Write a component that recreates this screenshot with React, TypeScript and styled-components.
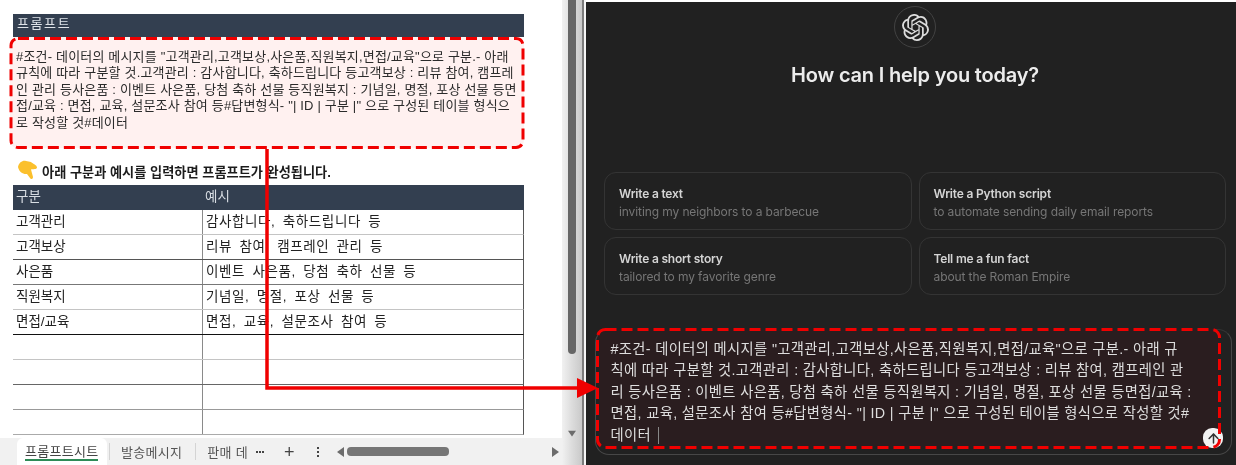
import React from 'react'
import styled, { createGlobalStyle } from 'styled-components'
import { SiOpenai } from 'react-icons/si'
import { ArrowUp } from 'lucide-react'

const KR = `'Liberation Sans', 'Noto Sans CJK KR', sans-serif`

const GlobalStyle = createGlobalStyle`
	html, body {
		margin: 0;
		padding: 0;
		background: #fff;
	}
	* {
		box-sizing: border-box;
	}
`

const leftPrompt = [
	'#조건- 데이터의 메시지를 "고객관리,고객보상,사은품,직원복지,면접/교육"으로 구분.- 아래',
	'규칙에 따라 구분할 것.고객관리 : 감사합니다, 축하드립니다 등고객보상 : 리뷰 참여, 캠프레',
	'인 관리 등사은품 : 이벤트 사은품, 당첨 축하 선물 등직원복지 : 기념일, 명절, 포상 선물 등면',
	'접/교육 : 면접, 교육, 설문조사 참여 등#답변형식- "| ID | 구분 |" 으로 구성된 테이블 형식으',
	'로 작성할 것#데이터',
]

const rightPrompt = [
	'#조건- 데이터의 메시지를 "고객관리,고객보상,사은품,직원복지,면접/교육"으로 구분.- 아래 규',
	'칙에 따라 구분할 것.고객관리 : 감사합니다, 축하드립니다 등고객보상 : 리뷰 참여, 캠프레인 관',
	'리 등사은품 : 이벤트 사은품, 당첨 축하 선물 등직원복지 : 기념일, 명절, 포상 선물 등면접/교육 :',
	'면접, 교육, 설문조사 참여 등#답변형식- "| ID | 구분 |" 으로 구성된 테이블 형식으로 작성할 것#',
]

const rows = [
	{ name: '고객관리', sample: '감사합니다, 축하드립니다 등', line: '#c4c4c4' },
	{ name: '고객보상', sample: '리뷰 참여, 캠프레인 관리 등', line: '#555' },
	{ name: '사은품', sample: '이벤트 사은품, 당첨 축하 선물 등', line: '#777' },
	{ name: '직원복지', sample: '기념일, 명절, 포상 선물 등', line: '#c4c4c4' },
	{ name: '면접/교육', sample: '면접, 교육, 설문조사 참여 등', line: '#111' },
	{ name: '', sample: '', line: '#c4c4c4' },
	{ name: '', sample: '', line: '#666' },
	{ name: '', sample: '', line: '#999' },
	{ name: '', sample: '', line: '#aaa' },
]

const suggestions = [
	{ title: 'Write a text', sub: 'inviting my neighbors to a barbecue' },
	{ title: 'Write a Python script', sub: 'to automate sending daily email reports' },
	{ title: 'Write a short story', sub: 'tailored to my favorite genre' },
	{ title: 'Tell me a fun fact', sub: 'about the Roman Empire' },
]

const App = () => {
	return (
		<Page>
			<GlobalStyle />
			<LeftPane>
				<Sheet>
					<SheetTitle>프롬프트</SheetTitle>
					<PromptCell>
						{leftPrompt.map((line) => (
							<PromptLine key={line}>{line}</PromptLine>
						))}
					</PromptCell>
					<Hint>
						<HandIcon viewBox="0 0 20 20">
							<path
								d="M0 7 C1 2 5 0 8 1 L13 2 C15 4 19 5 19 7.5 C19 9.5 15 9 13 9.5 L15 17 C15 19.5 12.5 19.5 12 18 L9 14 C5 14.5 1 12 0 7 Z"
								fill="#fbc02d"
							/>
						</HandIcon>
						아래 구분과 예시를 입력하면 프롬프트가 완성됩니다.
					</Hint>
					<TableHead>
						<HeadCell>구분</HeadCell>
						<HeadCell>예시</HeadCell>
					</TableHead>
					{rows.map((row, index) => (
						<TableRow key={index} line={row.line}>
							<BodyCell>{row.name}</BodyCell>
							<BodyCell>{row.sample}</BodyCell>
						</TableRow>
					))}
				</Sheet>
				<TabBar>
					<ActiveTab>프롬프트시트</ActiveTab>
					<TabDivider />
					<Tab>발송메시지</Tab>
					<TabDivider />
					<Tab>판매 데</Tab>
					<DotTool horizontal>
						<i />
						<i />
						<i />
					</DotTool>
					<PlusTool>+</PlusTool>
					<DotTool>
						<i />
						<i />
						<i />
					</DotTool>
					<HScroll>
						<ScrollArrow viewBox="0 0 8 10">
							<path d="M8 0 V10 L1 5 Z" />
						</ScrollArrow>
						<HThumb />
						<ScrollArrow viewBox="0 0 8 10">
							<path d="M0 0 V10 L7 5 Z" />
						</ScrollArrow>
					</HScroll>
				</TabBar>
			</LeftPane>
			<VScroll>
				<VThumb />
				<ScrollArrow viewBox="0 0 10 8">
					<path d="M0 0 H10 L5 7 Z" />
				</ScrollArrow>
			</VScroll>
			<PaneEdge />
			<ChatPane>
				<Hero>
					<LogoRing>
						<SiOpenai size={27} color="#dcdcdc" />
					</LogoRing>
					<Heading>How can I help you today?</Heading>
				</Hero>
				<CardGrid>
					{suggestions.map((item) => (
						<Card key={item.title}>
							<CardTitle>{item.title}</CardTitle>
							<CardSub>{item.sub}</CardSub>
						</Card>
					))}
				</CardGrid>
				<Composer>
					<ComposerText>
						{rightPrompt.map((line) => (
							<ComposerLine key={line}>{line}</ComposerLine>
						))}
						<ComposerLine>
							데이터 <Caret />
						</ComposerLine>
					</ComposerText>
					<SendButton>
						<ArrowUp size={15} strokeWidth={2.4} color="#333" />
					</SendButton>
				</Composer>
			</ChatPane>
			<Annotations viewBox="0 0 1236 465">
				<rect x="11" y="38.5" width="512" height="109" rx="7" fill="none" stroke="#f00000" strokeWidth="3" strokeDasharray="11 5" />
				<rect x="597.5" y="329.5" width="622" height="118" rx="8" fill="none" stroke="#f00000" strokeWidth="3" strokeDasharray="11 5" />
				<path d="M267 149 V388 H580" fill="none" stroke="#f00000" strokeWidth="3.5" />
				<path d="M577 378 L598 388 L577 398 Z" fill="#f00000" />
			</Annotations>
		</Page>
	)
}

const Page = styled.div`
	position: relative;
	display: flex;
	width: 1236px;
	height: 465px;
	overflow: hidden;
	background: #fff;
	filter: blur(0.35px);
`
const LeftPane = styled.div`
	display: flex;
	flex-direction: column;
	width: 562px;
	height: 100%;
`
const Sheet = styled.div`
	flex: 1;
	min-height: 0;
	overflow: hidden;
	padding: 14px 0 0 13px;
	width: 524px;
	font-family: ${KR};
	color: #222;
`
const SheetTitle = styled.div`
	height: 23px;
	padding-left: 4px;
	background: #333f50;
	color: #dfe3e8;
	font-size: 13px;
	line-height: 20px;
	letter-spacing: 1.6px;
`
const PromptCell = styled.div`
	height: 111px;
	margin-left: -3px;
	padding: 12px 0 0 6px;
	background: #fff1f0;
	border-radius: 8px;
`
const PromptLine = styled.div`
	font-size: 13px;
	line-height: 16.4px;
	letter-spacing: 0.18px;
	white-space: nowrap;
	color: #2b2b2b;
`
const Hint = styled.div`
	display: flex;
	align-items: center;
	gap: 4px;
	height: 37px;
	margin-left: 5px;
	padding-top: 10px;
	font-size: 13.2px;
	font-weight: 700;
	color: #1c1c1c;
`
const HandIcon = styled.svg`
	flex: none;
	width: 20px;
	height: 20px;
	margin-top: -3px;
`
const TableHead = styled.div`
	display: grid;
	grid-template-columns: 189px 1fr;
	height: 25px;
	background: #333f50;
`
const HeadCell = styled.div`
	padding: 1px 0 0 3px;
	font-size: 13.5px;
	line-height: 22px;
	color: #d8dde3;
`
const TableRow = styled.div<{ line: string }>`
	display: grid;
	grid-template-columns: 189px 1fr;
	height: 25px;
	border-bottom: 1.5px solid ${({ line }) => line};
	border-right: 1.5px solid #555;
`
const BodyCell = styled.div`
	padding: 1px 0 0 3px;
	font-size: 13.5px;
	line-height: 22px;
	white-space: nowrap;
	&:nth-child(2) {
		border-left: 1px solid #8a8a8a;
		letter-spacing: 0.6px;
		word-spacing: 3px;
	}
`
const TabBar = styled.div`
	display: flex;
	align-items: center;
	flex: none;
	height: 27px;
	padding-left: 17px;
	background: #f1f1f1;
	font-family: ${KR};
	font-size: 13px;
	color: #444;
`
const ActiveTab = styled.div`
	position: relative;
	width: 90px;
	height: 100%;
	padding: 3px 0 0 8px;
	background: #fff;
	border-radius: 6px 6px 0 0;
	white-space: nowrap;
	letter-spacing: 0.3px;
	color: #444;
	&::after {
		content: '';
		position: absolute;
		left: 8px;
		bottom: 4px;
		width: 73px;
		height: 2px;
		background: #2e8b57;
	}
`
const Tab = styled.div`
	padding: 0 11px;
	white-space: nowrap;
	color: #555;
	letter-spacing: 0.3px;
`
const TabDivider = styled.span`
	width: 1px;
	height: 17px;
	margin-left: 2px;
	background: #d4d4d4;
`
const DotTool = styled.span<{ horizontal?: boolean }>`
	display: flex;
	flex-direction: ${({ horizontal }) => (horizontal ? 'row' : 'column')};
	gap: ${({ horizontal }) => (horizontal ? '1px' : '2px')};
	margin-left: ${({ horizontal }) => (horizontal ? '-3px' : '22px')};
	& > i {
		display: block;
		width: 2px;
		height: 2px;
		background: #444;
	}
`
const PlusTool = styled.span`
	margin-left: 20px;
	font-size: 18px;
	font-weight: 300;
	line-height: 1;
	color: #444;
`
const HScroll = styled.div`
	display: flex;
	align-items: center;
	flex: 1;
	margin-left: 17px;
	padding-right: 2px;
	height: 100%;
	& > svg:last-child {
		margin-left: auto;
	}
`
const HThumb = styled.div`
	width: 102px;
	height: 9px;
	margin-left: 3px;
	border-radius: 4px;
	background: #767676;
`
const ScrollArrow = styled.svg`
	width: 8px;
	height: 10px;
	fill: #6c6c6c;
`
const VScroll = styled.div`
	display: flex;
	flex-direction: column;
	align-items: center;
	justify-content: space-between;
	width: 20px;
	height: 100%;
	padding-bottom: 26px;
	background: linear-gradient(90deg, #f1f1f1, #dcdcdc 50%, #c9c9c9);
`
const VThumb = styled.div`
	width: 8px;
	height: 354px;
	border-radius: 0 0 4px 4px;
	background: #666;
`
const PaneEdge = styled.div`
	width: 4px;
	height: 100%;
	border-left: 2px solid #7c7c7c;
	background: #f5f5f5;
`
const ChatPane = styled.div`
	display: flex;
	flex-direction: column;
	flex: 1;
	margin-top: 2px;
	padding: 4px 4px 0 9px;
	background: #212121;
	font-family: Inter, 'Noto Sans', sans-serif;
`
const Hero = styled.div`
	display: flex;
	flex-direction: column;
	align-items: center;
	padding-left: 3px;
`
const LogoRing = styled.div`
	display: flex;
	align-items: center;
	justify-content: center;
	width: 42px;
	height: 42px;
	border: 1px solid #424242;
	border-radius: 50%;
`
const Heading = styled.h1`
	margin: 14px 0 0;
	font-size: 20px;
	line-height: 26px;
	font-weight: 600;
	letter-spacing: -0.2px;
	color: #ececec;
`
const CardGrid = styled.div`
	display: grid;
	grid-template-columns: 1fr 1fr;
	gap: 7px;
	margin: 84px 6px 0 9px;
`
const Card = styled.div`
	height: 58px;
	padding: 12px 14px 0;
	border: 1px solid #343434;
	border-radius: 12px;
`
const CardTitle = styled.div`
	font-size: 12px;
	line-height: 17px;
	font-weight: 600;
	letter-spacing: -0.2px;
	color: #d4d4d4;
`
const CardSub = styled.div`
	margin-top: 1px;
	font-size: 12px;
	line-height: 17px;
	letter-spacing: -0.1px;
	color: #767676;
`
const Composer = styled.div`
	position: relative;
	height: 126px;
	margin-top: 34px;
	padding-right: 12px;
	border: 1.5px solid #474747;
	border-top-color: #333;
	border-radius: 14px;
`
const ComposerText = styled.div`
	height: 118px;
	margin: -1.5px 0 0 1.5px;
	padding: 10px 0 0 13px;
	border-radius: 8px;
	background: #2a1d1f;
	font-family: ${KR};
	font-size: 14.3px;
	line-height: 21.5px;
	letter-spacing: 0.35px;
	color: #dedede;
`
const ComposerLine = styled.div`
	white-space: nowrap;
`
const Caret = styled.span`
	display: inline-block;
	width: 1px;
	height: 17px;
	margin-left: 3px;
	vertical-align: -4px;
	background: #888;
`
const SendButton = styled.div`
	position: absolute;
	right: 8px;
	bottom: 6px;
	display: flex;
	align-items: center;
	justify-content: center;
	width: 20px;
	height: 20px;
	border-radius: 9px;
	background: #f2f2f2;
`
const Annotations = styled.svg`
	position: absolute;
	left: 0;
	top: 0;
	width: 1236px;
	height: 465px;
	pointer-events: none;
`

export default App
